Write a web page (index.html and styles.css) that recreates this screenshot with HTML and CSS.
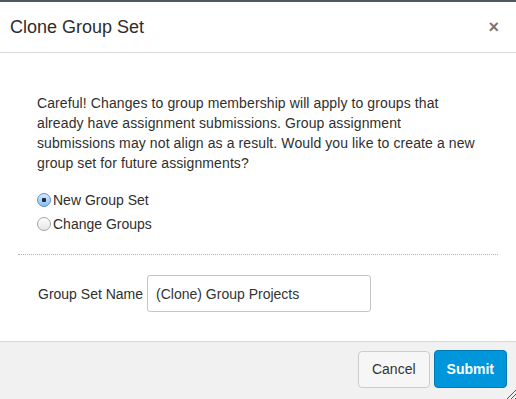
FILE: index.html
```html
<!DOCTYPE html>
<html lang="en">
<head>
    <meta charset="UTF-8">
    <title>Clone Group Set</title>
    <link rel="stylesheet" href="styles.css">
</head>
<body>
    <div class="dialog">
        <!-- title bar -->
        <header class="dialog-header">
            <h1>Clone Group Set</h1>
            <span class="close">&times;</span>
        </header>

        <!-- body -->
        <main class="dialog-body">
            <p class="warning">Careful! Changes to group membership will apply to groups that already have assignment submissions. Group assignment submissions may not align as a result. Would you like to create a new group set for future assignments?</p>

            <div class="choices">
                <label class="choice"><input type="radio" name="mode" checked>New Group Set</label>
                <label class="choice"><input type="radio" name="mode">Change Groups</label>
            </div>

            <div class="name-row">
                <label for="set-name">Group Set Name</label>
                <input type="text" id="set-name" value="(Clone) Group Projects">
            </div>
        </main>

        <!-- buttons -->
        <footer class="dialog-footer">
            <button class="btn">Cancel</button>
            <button class="btn btn-primary">Submit</button>
            <svg class="grip" width="11" height="11" viewBox="0 0 11 11">
                <path d="M11 2 L2 11 M11 6 L6 11 M11 10 L10 11" stroke="#555" stroke-width="1" fill="none"/>
            </svg>
        </footer>
    </div>
</body>
</html>
```

FILE: styles.css
```css
* {
    margin: 0;
    padding: 0;
    box-sizing: border-box;
}

body {
    font-family: "Liberation Sans", Arial, Helvetica, sans-serif;
    color: #333;
    background: #fff;
}

.dialog {
    width: 516px;
    height: 399px;
    display: flex;
    flex-direction: column;
    border-top: 2px solid #4d5963;
}

/* title bar */
.dialog-header {
    height: 51px;
    display: flex;
    align-items: center;
    justify-content: space-between;
    padding: 0 17px 0 10px;
    border-bottom: 1px solid #dcdcdc;
}

.dialog-header h1 {
    font-size: 18px;
    font-weight: normal;
    color: #2d2d2d;
}

.close {
    font-size: 18px;
    font-weight: bold;
    color: #777;
    line-height: 1;
}

/* body */
.dialog-body {
    flex: 1;
    padding: 40px 18px 0;
}

.warning {
    width: 440px;
    margin-left: 19px;
    font-size: 14px;
    line-height: 20px;
    letter-spacing: 0.1px;
    color: #2f2f2f;
}

.choices {
    margin-top: 15px;
    padding: 0 0 18px 19px;
    border-bottom: 1px dotted #b5b5b5;
}

.choice {
    display: flex;
    align-items: center;
    height: 24px;
    font-size: 14px;
    color: #2f2f2f;
}

.choice input {
    appearance: none;
    -webkit-appearance: none;
    width: 14px;
    height: 14px;
    margin-right: 2px;
    border: 1px solid #a5a5a5;
    border-radius: 50%;
    background: linear-gradient(#fdfdfd, #e6e6e6);
}

.choice input:checked {
    border-color: #5c8fcf;
    background: radial-gradient(circle, #1d2a3a 0 2px, transparent 2.5px),
                linear-gradient(#d7e8fb, #8cbcf1);
}

.name-row {
    display: flex;
    align-items: center;
    margin: 20px 0 0 20px;
    font-size: 14px;
    color: #2f2f2f;
}

.name-row label {
    margin-right: 4px;
}

.name-row input {
    width: 224px;
    height: 37px;
    padding: 0 8px;
    border: 1px solid #c5c5c5;
    border-radius: 3px;
    font-family: inherit;
    font-size: 14px;
    color: #333;
}

/* footer */
.dialog-footer {
    position: relative;
    height: 58px;
    display: flex;
    justify-content: flex-end;
    align-items: center;
    gap: 4px;
    padding: 0 9px 3px 0;
    background: #f1f1f1;
    border-top: 1px solid #d6d6d6;
}

.btn {
    height: 37px;
    padding: 0 13px;
    font-family: inherit;
    font-size: 14px;
    color: #333;
    background: #f6f6f6;
    border: 1px solid #c7cdd1;
    border-radius: 4px;
}

.btn-primary {
    height: 38px;
    padding: 0 12px;
    color: #fff;
    font-weight: bold;
    background: #0096db;
    border-color: #0079b1;
}

.grip {
    position: absolute;
    right: 0;
    bottom: 0;
}
```
